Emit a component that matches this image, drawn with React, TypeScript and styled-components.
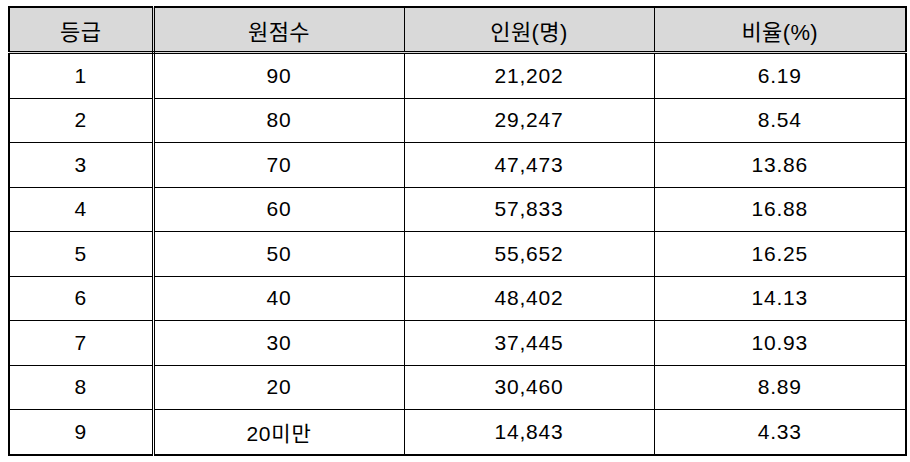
import { createGlobalStyle } from 'styled-components';
import styled from 'styled-components';

const GlobalStyle = createGlobalStyle`
  html, body {
    margin: 0;
    padding: 0;
    background: #fff;
  }
  body {
    font-family: 'Liberation Sans', 'Noto Sans CJK KR', sans-serif;
    color: #000;
  }
`;

const Wrapper = styled.div`
  padding: 6px 0 0 8px;
`;

const GradeTable = styled.table`
  width: 897px;
  table-layout: fixed;
  border-collapse: collapse;
  border: 2px solid #000;
  font-size: 21px;
  letter-spacing: 0.8px;
`;

const HeadCell = styled.th`
  height: 43px;
  padding: 0;
  background: #d9d9d9;
  font-weight: normal;
  font-size: 22px;
  letter-spacing: 0.4px;
  border: 1px solid #000;
  border-bottom: 3px double #000;
  text-align: center;
  vertical-align: middle;
  &:first-child {
    border-right: 3px double #000;
  }
`;

const Cell = styled.td`
  height: 43.5px;
  padding: 0;
  border: 1px solid #000;
  text-align: center;
  vertical-align: middle;
  &:first-child {
    border-right: 3px double #000;
  }
`;

type Row = {
  grade: string;
  score: string;
  count: string;
  ratio: string;
};

const rows: Row[] = [
  { grade: '1', score: '90', count: '21,202', ratio: '6.19' },
  { grade: '2', score: '80', count: '29,247', ratio: '8.54' },
  { grade: '3', score: '70', count: '47,473', ratio: '13.86' },
  { grade: '4', score: '60', count: '57,833', ratio: '16.88' },
  { grade: '5', score: '50', count: '55,652', ratio: '16.25' },
  { grade: '6', score: '40', count: '48,402', ratio: '14.13' },
  { grade: '7', score: '30', count: '37,445', ratio: '10.93' },
  { grade: '8', score: '20', count: '30,460', ratio: '8.89' },
  { grade: '9', score: '20미만', count: '14,843', ratio: '4.33' },
];

function App() {
  return (
    <Wrapper>
      <GlobalStyle />
      <GradeTable>
        <colgroup>
          <col style={{ width: 144 }} />
          <col style={{ width: 251 }} />
          <col style={{ width: 250 }} />
          <col style={{ width: 252 }} />
        </colgroup>
        <thead>
          <tr>
            <HeadCell>등급</HeadCell>
            <HeadCell>원점수</HeadCell>
            <HeadCell>인원(명)</HeadCell>
            <HeadCell>비율(%)</HeadCell>
          </tr>
        </thead>
        <tbody>
          {rows.map((r) => (
            <tr key={r.grade}>
              <Cell>{r.grade}</Cell>
              <Cell>{r.score}</Cell>
              <Cell>{r.count}</Cell>
              <Cell>{r.ratio}</Cell>
            </tr>
          ))}
        </tbody>
      </GradeTable>
    </Wrapper>
  );
}

export default App;
